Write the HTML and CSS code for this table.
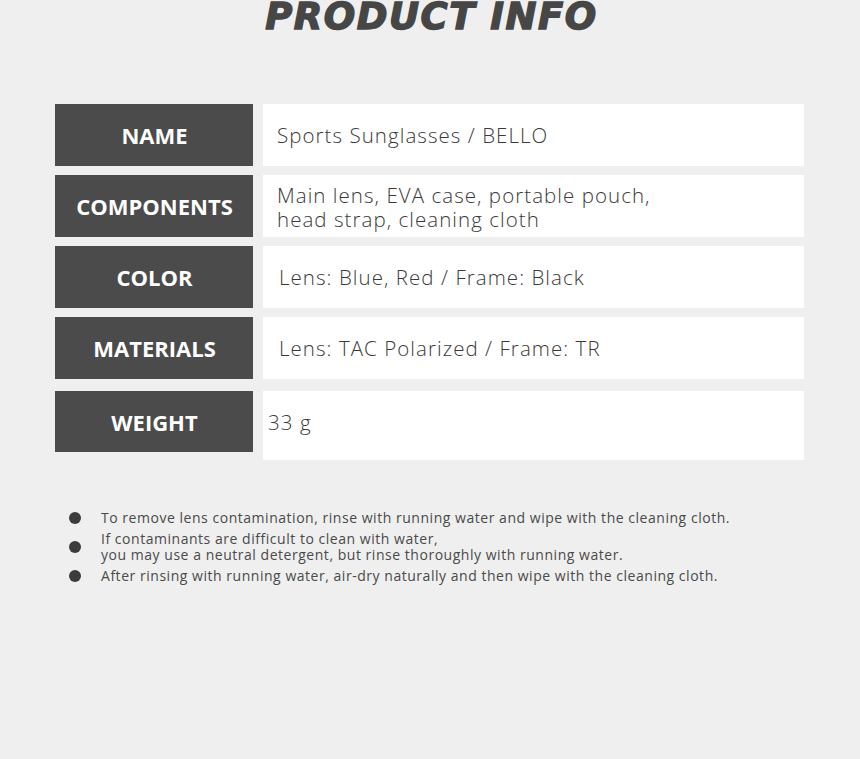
FILE: index.html
```html
<!DOCTYPE html>
<html lang="en">
<head>
<meta charset="utf-8">
<title>Product Info</title>
<link rel="stylesheet" href="styles.css">
</head>
<body>
<main class="page">
  <h1 class="title">PRODUCT INFO</h1>
  <section class="spec">
    <div class="row">
      <div class="label">NAME</div>
      <div class="value">Sports Sunglasses / BELLO</div>
    </div>
    <div class="row">
      <div class="label">COMPONENTS</div>
      <div class="value value-multi">Main lens, EVA case, portable pouch,<br>head strap, cleaning cloth</div>
    </div>
    <div class="row">
      <div class="label">COLOR</div>
      <div class="value value-shift">Lens: Blue, Red / Frame: Black</div>
    </div>
    <div class="row">
      <div class="label">MATERIALS</div>
      <div class="value value-shift">Lens: TAC Polarized / Frame: TR</div>
    </div>
    <div class="row row-last">
      <div class="label">WEIGHT</div>
      <div class="value value-tight">33 g</div>
    </div>
  </section>
  <ul class="notes">
    <li>To remove lens contamination, rinse with running water and wipe with the cleaning cloth.</li>
    <li>If contaminants are difficult to clean with water,<br>you may use a neutral detergent, but rinse thoroughly with running water.</li>
    <li>After rinsing with running water, air-dry naturally and then wipe with the cleaning cloth.</li>
  </ul>
</main>
</body>
</html>
```

FILE: styles.css
```css
html, body {
  margin: 0;
  padding: 0;
}

body {
  background: #efefef;
  width: 860px;
  height: 759px;
  overflow: hidden;
}

.page {
  display: flex;
  flex-direction: column;
}

.title {
  margin: 0;
  height: 34px;
  line-height: 34px;
  text-align: center;
  font-family: "DejaVu Sans", sans-serif;
  font-weight: bold;
  font-style: oblique;
  font-size: 37px;
  letter-spacing: 1.5px;
  color: #464646;
  -webkit-text-stroke: 1.4px #464646;
  padding-left: 3px;
}

.spec {
  margin: 70px 0 0 55px;
  width: 749px;
  display: flex;
  flex-direction: column;
  gap: 9px;
}

.row {
  display: grid;
  grid-template-columns: 198px 1fr;
  column-gap: 10px;
  height: 62px;
}

.row-last {
  margin-top: 3px;
  height: 69px;
  align-items: start;
}

.label {
  background: #4b4b4b;
  color: #ffffff;
  font-family: "Open Sans", sans-serif;
  font-weight: bold;
  font-size: 22px;
  display: flex;
  align-items: center;
  justify-content: center;
  height: 62px;
  padding-left: 1px;
}

.row-last .label {
  height: 61px;
}

.value {
  background: #ffffff;
  color: #3a3a3a;
  font-family: "Open Sans", sans-serif;
  font-weight: 300;
  font-size: 20.5px;
  letter-spacing: 1.05px;
  line-height: 24px;
  display: flex;
  align-items: center;
  padding-left: 14px;
  height: 100%;
  box-sizing: border-box;
}

.value-multi {
  padding-top: 2px;
}

.value-shift {
  padding-left: 16px;
}

.value-tight {
  padding-left: 5px;
  padding-bottom: 7px;
  height: 69px;
}

.notes {
  list-style: none;
  margin: 50px 0 0 69px;
  padding: 0;
  display: flex;
  flex-direction: column;
  gap: 5px;
  font-family: "Open Sans", sans-serif;
  font-size: 14px;
  letter-spacing: 0.53px;
  line-height: 16px;
  color: #4a4a4a;
}

.notes li {
  display: flex;
  align-items: center;
  gap: 20px;
}

.notes li::before {
  content: "";
  flex: none;
  width: 12px;
  height: 12px;
  border-radius: 50%;
  background: #3c3c3c;
}
```
